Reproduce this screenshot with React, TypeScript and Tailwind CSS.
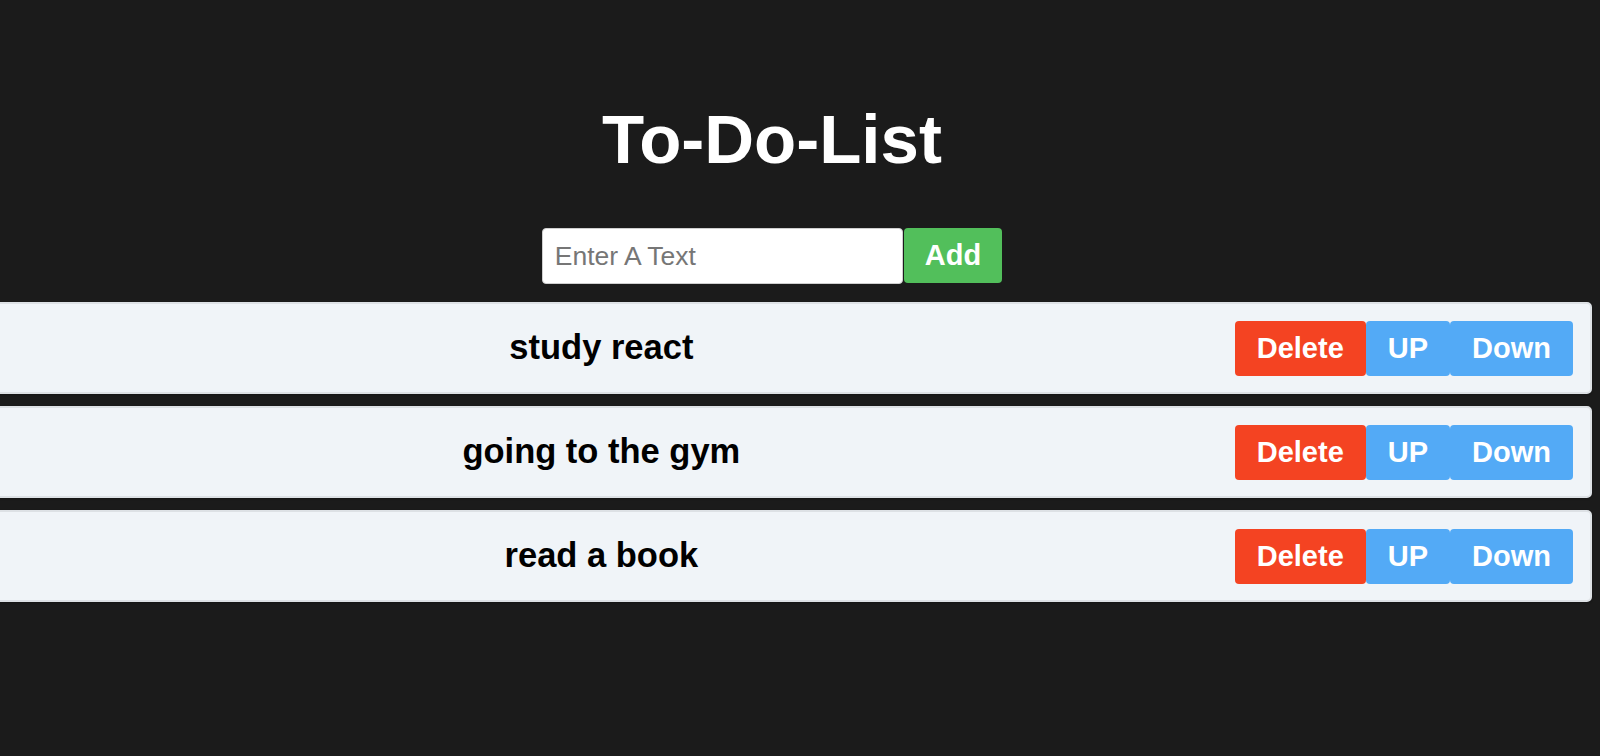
import { useState } from "react";

const initialTodos = ["study react", "going to the gym", "read a book"];

export default function App() {
  const [todos, setTodos] = useState(initialTodos);
  const [text, setText] = useState("");

  const add = () => {
    if (!text.trim()) return;
    setTodos([...todos, text]);
    setText("");
  };

  const remove = (i: number) => setTodos(todos.filter((_, idx) => idx !== i));

  const move = (i: number, dir: number) => {
    const j = i + dir;
    if (j < 0 || j >= todos.length) return;
    const next = [...todos];
    [next[i], next[j]] = [next[j], next[i]];
    setTodos(next);
  };

  return (
    <main className="min-h-screen overflow-hidden bg-[#1b1b1b] pt-[101px] font-['Liberation_Sans',Arial,sans-serif]">
      <div className="-ml-12 mr-2">
        <h1 className="text-center text-[69px] font-bold leading-[78px] text-white">
          To-Do-List
        </h1>
        <div className="mt-[49px] flex justify-center gap-px">
          <input
            className="h-[56px] w-[361px] rounded-[4px] border border-[#cfcfcf] bg-white px-[12px] text-[26.5px] text-black outline-none placeholder:text-[#767676]"
            placeholder="Enter A Text"
            value={text}
            onChange={(e) => setText(e.target.value)}
          />
          <button
            className="h-[55px] rounded-[4px] bg-[#52bf5b] px-[21px] text-[29px] font-bold text-white"
            onClick={add}
          >
            Add
          </button>
        </div>
        <ol className="mt-[18px] flex flex-col gap-3">
          {todos.map((todo, i) => (
            <li
              key={todo + i}
              className="flex h-[92px] items-center gap-[3px] rounded-[5px] border-2 border-[#dde1e5] bg-[#f0f4f8] pl-[17px] pr-[17px] shadow-[0_1px_2px_rgba(0,0,0,0.25)]"
            >
              <span className="flex-1 text-center text-[34.5px] font-bold text-black">
                {todo}
              </span>
              <div className="flex">
                <button
                  className="rounded-[4px] bg-[#f44322] px-[22px] py-[11px] text-[29px] font-bold leading-[33px] text-white"
                  onClick={() => remove(i)}
                >
                  Delete
                </button>
                <button
                  className="rounded-[4px] bg-[#53aaf6] px-[22px] py-[11px] text-[29px] font-bold leading-[33px] text-white"
                  onClick={() => move(i, -1)}
                >
                  UP
                </button>
                <button
                  className="rounded-[4px] bg-[#53aaf6] px-[22px] py-[11px] text-[29px] font-bold leading-[33px] text-white"
                  onClick={() => move(i, 1)}
                >
                  Down
                </button>
              </div>
            </li>
          ))}
        </ol>
      </div>
    </main>
  );
}
